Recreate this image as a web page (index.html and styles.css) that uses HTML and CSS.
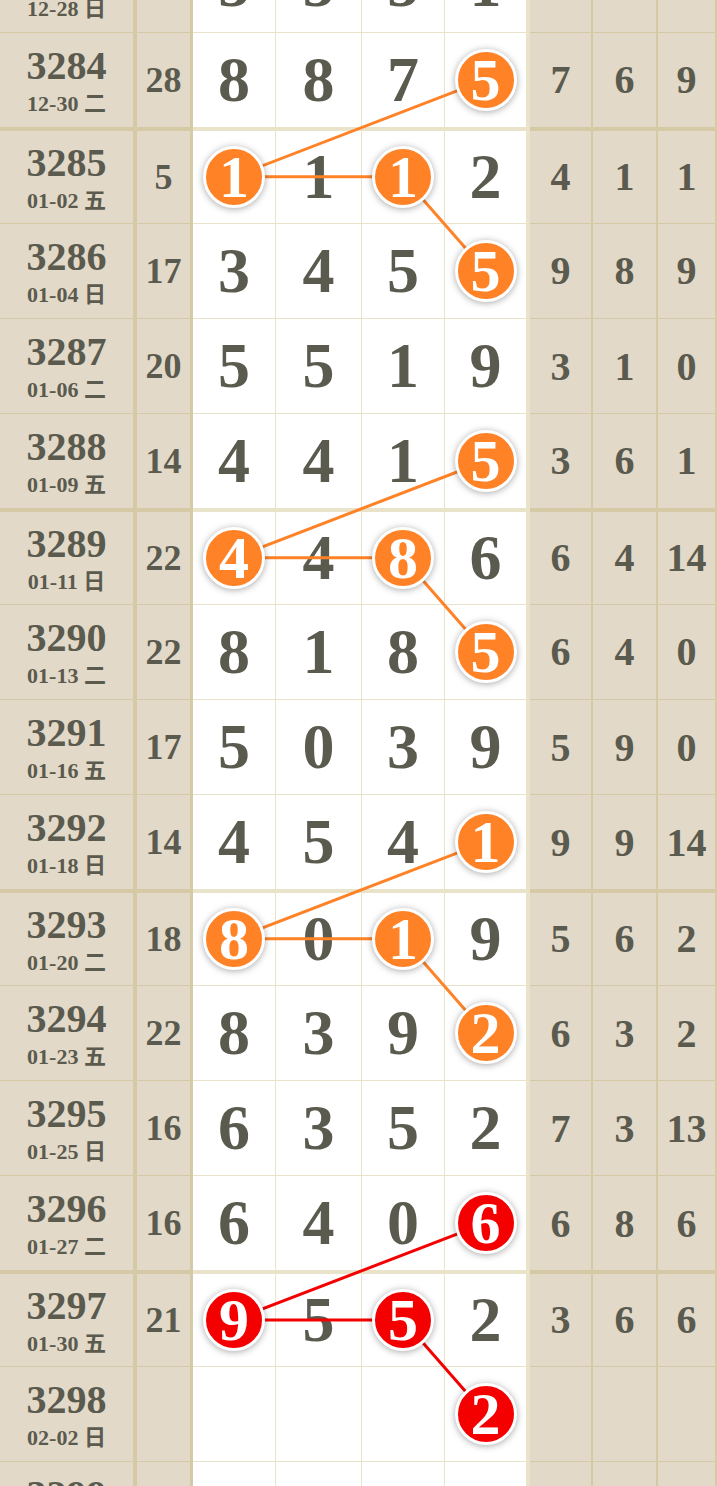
FILE: index.html
```html
<!DOCTYPE html>
<html lang="zh">
<head>
    <meta charset="UTF-8">
    <meta name="viewport" content="width=device-width, initial-scale=1.0">
    <title>走势图</title>
    <link rel="stylesheet" href="styles.css">
</head>
<body>
    <!-- Trend Chart -->
    <div class="chart">
        <div class="row">
            <div class="cell issue"><span class="no">3283</span><span class="date">12-28 日</span></div>
            <div class="cell sum">16</div>
            <div class="cell num">5</div>
            <div class="cell num">5</div>
            <div class="cell num">5</div>
            <div class="cell num last">1</div>
            <div class="cell side">5</div>
            <div class="cell side">2</div>
            <div class="cell side">8</div>
        </div>
        <div class="row group-end">
            <div class="cell issue"><span class="no">3284</span><span class="date">12-30 二</span></div>
            <div class="cell sum">28</div>
            <div class="cell num">8</div>
            <div class="cell num">8</div>
            <div class="cell num">7</div>
            <div class="cell num last"><span class="ball">5</span></div>
            <div class="cell side">7</div>
            <div class="cell side">6</div>
            <div class="cell side">9</div>
        </div>

        <div class="row group-start">
            <div class="cell issue"><span class="no">3285</span><span class="date">01-02 五</span></div>
            <div class="cell sum">5</div>
            <div class="cell num"><span class="ball">1</span></div>
            <div class="cell num">1</div>
            <div class="cell num"><span class="ball">1</span></div>
            <div class="cell num last">2</div>
            <div class="cell side">4</div>
            <div class="cell side">1</div>
            <div class="cell side">1</div>
        </div>
        <div class="row">
            <div class="cell issue"><span class="no">3286</span><span class="date">01-04 日</span></div>
            <div class="cell sum">17</div>
            <div class="cell num">3</div>
            <div class="cell num">4</div>
            <div class="cell num">5</div>
            <div class="cell num last"><span class="ball">5</span></div>
            <div class="cell side">9</div>
            <div class="cell side">8</div>
            <div class="cell side">9</div>
        </div>
        <div class="row">
            <div class="cell issue"><span class="no">3287</span><span class="date">01-06 二</span></div>
            <div class="cell sum">20</div>
            <div class="cell num">5</div>
            <div class="cell num">5</div>
            <div class="cell num">1</div>
            <div class="cell num last">9</div>
            <div class="cell side">3</div>
            <div class="cell side">1</div>
            <div class="cell side">0</div>
        </div>
        <div class="row group-end">
            <div class="cell issue"><span class="no">3288</span><span class="date">01-09 五</span></div>
            <div class="cell sum">14</div>
            <div class="cell num">4</div>
            <div class="cell num">4</div>
            <div class="cell num">1</div>
            <div class="cell num last"><span class="ball">5</span></div>
            <div class="cell side">3</div>
            <div class="cell side">6</div>
            <div class="cell side">1</div>
        </div>

        <div class="row group-start">
            <div class="cell issue"><span class="no">3289</span><span class="date">01-11 日</span></div>
            <div class="cell sum">22</div>
            <div class="cell num"><span class="ball">4</span></div>
            <div class="cell num">4</div>
            <div class="cell num"><span class="ball">8</span></div>
            <div class="cell num last">6</div>
            <div class="cell side">6</div>
            <div class="cell side">4</div>
            <div class="cell side">14</div>
        </div>
        <div class="row">
            <div class="cell issue"><span class="no">3290</span><span class="date">01-13 二</span></div>
            <div class="cell sum">22</div>
            <div class="cell num">8</div>
            <div class="cell num">1</div>
            <div class="cell num">8</div>
            <div class="cell num last"><span class="ball">5</span></div>
            <div class="cell side">6</div>
            <div class="cell side">4</div>
            <div class="cell side">0</div>
        </div>
        <div class="row">
            <div class="cell issue"><span class="no">3291</span><span class="date">01-16 五</span></div>
            <div class="cell sum">17</div>
            <div class="cell num">5</div>
            <div class="cell num">0</div>
            <div class="cell num">3</div>
            <div class="cell num last">9</div>
            <div class="cell side">5</div>
            <div class="cell side">9</div>
            <div class="cell side">0</div>
        </div>
        <div class="row group-end">
            <div class="cell issue"><span class="no">3292</span><span class="date">01-18 日</span></div>
            <div class="cell sum">14</div>
            <div class="cell num">4</div>
            <div class="cell num">5</div>
            <div class="cell num">4</div>
            <div class="cell num last"><span class="ball">1</span></div>
            <div class="cell side">9</div>
            <div class="cell side">9</div>
            <div class="cell side">14</div>
        </div>

        <div class="row group-start">
            <div class="cell issue"><span class="no">3293</span><span class="date">01-20 二</span></div>
            <div class="cell sum">18</div>
            <div class="cell num"><span class="ball">8</span></div>
            <div class="cell num">0</div>
            <div class="cell num"><span class="ball">1</span></div>
            <div class="cell num last">9</div>
            <div class="cell side">5</div>
            <div class="cell side">6</div>
            <div class="cell side">2</div>
        </div>
        <div class="row">
            <div class="cell issue"><span class="no">3294</span><span class="date">01-23 五</span></div>
            <div class="cell sum">22</div>
            <div class="cell num">8</div>
            <div class="cell num">3</div>
            <div class="cell num">9</div>
            <div class="cell num last"><span class="ball">2</span></div>
            <div class="cell side">6</div>
            <div class="cell side">3</div>
            <div class="cell side">2</div>
        </div>
        <div class="row">
            <div class="cell issue"><span class="no">3295</span><span class="date">01-25 日</span></div>
            <div class="cell sum">16</div>
            <div class="cell num">6</div>
            <div class="cell num">3</div>
            <div class="cell num">5</div>
            <div class="cell num last">2</div>
            <div class="cell side">7</div>
            <div class="cell side">3</div>
            <div class="cell side">13</div>
        </div>
        <div class="row group-end">
            <div class="cell issue"><span class="no">3296</span><span class="date">01-27 二</span></div>
            <div class="cell sum">16</div>
            <div class="cell num">6</div>
            <div class="cell num">4</div>
            <div class="cell num">0</div>
            <div class="cell num last"><span class="ball red">6</span></div>
            <div class="cell side">6</div>
            <div class="cell side">8</div>
            <div class="cell side">6</div>
        </div>

        <div class="row group-start">
            <div class="cell issue"><span class="no">3297</span><span class="date">01-30 五</span></div>
            <div class="cell sum">21</div>
            <div class="cell num"><span class="ball red">9</span></div>
            <div class="cell num">5</div>
            <div class="cell num"><span class="ball red">5</span></div>
            <div class="cell num last">2</div>
            <div class="cell side">3</div>
            <div class="cell side">6</div>
            <div class="cell side">6</div>
        </div>
        <div class="row">
            <div class="cell issue"><span class="no">3298</span><span class="date">02-02 日</span></div>
            <div class="cell sum"></div>
            <div class="cell num"></div>
            <div class="cell num"></div>
            <div class="cell num"></div>
            <div class="cell num last"><span class="ball red">2</span></div>
            <div class="cell side"></div>
            <div class="cell side"></div>
            <div class="cell side"></div>
        </div>
        <div class="row">
            <div class="cell issue"><span class="no">3299</span><span class="date">02-04 二</span></div>
            <div class="cell sum"></div>
            <div class="cell num"></div>
            <div class="cell num"></div>
            <div class="cell num"></div>
            <div class="cell num last"></div>
            <div class="cell side"></div>
            <div class="cell side"></div>
            <div class="cell side"></div>
        </div>

        <!-- connecting lines, drawn under the balls -->
        <svg class="links" width="717" height="1610" viewBox="0 -62 717 1610">
            <polyline class="orange" points="485.5,79.9 234,176.7 403,176.7 485.5,270.9"/>
            <polyline class="orange" points="485.5,461 234,557.8 403,557.8 485.5,652"/>
            <polyline class="orange" points="485.5,842.1 234,938.8 403,938.8 485.5,1033.1"/>
            <polyline class="red" points="485.5,1223.1 234,1319.9 403,1319.9 485.5,1414.2"/>
        </svg>
    </div>
</body>
</html>
```

FILE: styles.css
```css
* {
    box-sizing: border-box;
    margin: 0;
    padding: 0;
}

body {
    width: 717px;
    height: 1486px;
    overflow: hidden;
    background: #e2d9c8;
    color: #5a5a4e;
    font-family: "Liberation Serif", "Noto Sans CJK SC", serif;
    font-weight: bold;
}

/* Chart */
.chart {
    position: relative;
    margin-top: -62px;
}

.row {
    display: grid;
    grid-template-columns: 137px 56px 83px 86px 83px 85px 63px 65px 59px;
    height: 95.27px;
}

.cell {
    display: flex;
    align-items: center;
    justify-content: center;
    background: #e2d9c8;
    border-right: 1px solid rgba(190, 175, 100, 0.35);
    border-bottom: 1px solid rgba(190, 175, 100, 0.35);
}

.row.group-end .cell {
    border-bottom-width: 2px;
}

.row.group-start .cell {
    border-top: 2px solid rgba(190, 175, 100, 0.35);
}

/* issue + date */
.issue {
    flex-direction: column;
    gap: 6px;
    padding-top: 2px;
    border-right-width: 4px;
}

.issue .no {
    font-size: 40px;
    line-height: 40px;
}

.issue .date {
    font-size: 22px;
    line-height: 24px;
}

.sum {
    font-size: 36px;
    border-right-width: 3px;
}

/* draw numbers */
.num {
    background: #fff;
    font-size: 64px;
    line-height: 1;
}

.num.last {
    border-right-width: 4px;
}

.side {
    font-size: 40px;
    border-right-width: 2px;
}

/* balls */
.ball {
    position: relative;
    z-index: 2;
    width: 62px;
    height: 62px;
    display: flex;
    align-items: center;
    justify-content: center;
    border: 3px solid #fff;
    border-radius: 50%;
    background: #ff8227;
    color: #fff;
    font-size: 60px;
    line-height: 1;
    box-shadow: 0 1px 7px rgba(0, 0, 0, 0.35);
}

.ball.red {
    background: #f50000;
}

.links {
    position: absolute;
    top: 0;
    left: 0;
    z-index: 1;
    pointer-events: none;
}

.links polyline {
    fill: none;
    stroke-width: 3;
}

.links .orange {
    stroke: #ff8227;
}

.links .red {
    stroke: #f50000;
}
```
